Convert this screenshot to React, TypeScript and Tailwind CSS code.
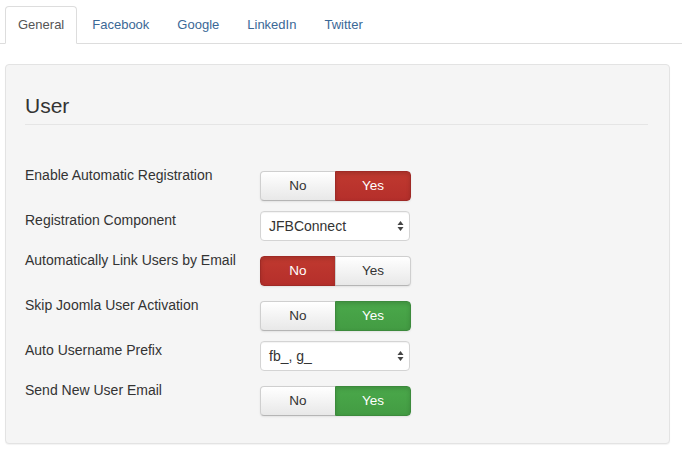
import React from "react";

const font = { fontFamily: '"Liberation Sans", Arial, sans-serif' };

function Toggle({ value, color }: { value: "no" | "yes"; color: "red" | "green" }) {
  const active =
    color === "red"
      ? "bg-[linear-gradient(#c0392f,#b52f2b)] border-[#9f2a26] text-white shadow-[inset_0_2px_4px_rgba(0,0,0,0.15)]"
      : "bg-[linear-gradient(#4aa84a,#439c43)] border-[#3c8a3c] text-white shadow-[inset_0_2px_4px_rgba(0,0,0,0.15)]";
  const inactive =
    "bg-[linear-gradient(#ffffff,#e8e8e8)] border-[#cfcfcf] border-b-[#b5b5b5] text-[#333] shadow-[inset_0_1px_0_rgba(255,255,255,0.3)]";
  return (
    <div className="mt-[5px] flex h-[30px] w-[151px] text-[13.5px] shadow-[0_1px_2px_rgba(0,0,0,0.08)] rounded-[4px]">
      <div
        className={`flex w-[76px] items-center justify-center rounded-l-[4px] border ${
          value === "no" ? active : inactive
        }`}
      >
        No
      </div>
      <div
        className={`-ml-px flex w-[76px] items-center justify-center rounded-r-[4px] border ${
          value === "yes" ? active : inactive
        }`}
      >
        Yes
      </div>
    </div>
  );
}

function Select({ text }: { text: string }) {
  return (
    <div className="flex h-[30px] w-[150px] items-center justify-between rounded-[4px] border border-[#d4d4d4] bg-white pl-[8px] pr-[5px] text-[14px] text-[#333] shadow-[inset_0_1px_1px_rgba(0,0,0,0.05)]">
      <span>{text}</span>
      <svg width="7" height="12" viewBox="0 0 7 12">
        <path d="M3.5 1 L6.5 5 L0.5 5 Z" fill="#444" />
        <path d="M3.5 11 L6.5 7 L0.5 7 Z" fill="#444" />
      </svg>
    </div>
  );
}

function Row({ label, children, first }: { label: string; children: React.ReactNode; first?: boolean }) {
  return (
    <div className={`flex ${first ? "mt-[41px]" : "mt-[10px]"}`}>
      <div className="w-[235px] text-[14px] leading-[18px] text-[#333]">{label}</div>
      {children}
    </div>
  );
}

export default function App() {
  const tabs = ["General", "Facebook", "Google", "LinkedIn", "Twitter"];
  return (
    <div className="h-[454px] w-[682px] bg-white" style={font}>
      <div className="flex border-b border-[#dddddd] pl-[5px] pt-[6px]">
        {tabs.map((t, i) => (
          <div
            key={t}
            className={`-mb-px mr-[2px] flex h-[38px] items-center rounded-t-[4px] border px-[12px] text-[13px] ${
              i === 0
                ? "border-[#dddddd] border-b-white bg-white text-[#555]"
                : "border-transparent text-[#3b6896]"
            }`}
          >
            {t}
          </div>
        ))}
      </div>
      <div className="mx-[5px] mt-[20px] h-[380px] w-[665px] rounded-[4px] border border-[#e3e3e3] bg-[#f5f5f5] pl-[19px] pr-[21px] pt-[29px] shadow-[0_1px_1px_rgba(0,0,0,0.05)]">
        <div className="border-b border-[#e5e5e5] pb-[7px] text-[21px] leading-[23px] text-[#333]">User</div>
        <Row label="Enable Automatic Registration" first>
          <Toggle value="yes" color="red" />
        </Row>
        <Row label="Registration Component">
          <Select text="JFBConnect" />
        </Row>
        <Row label="Automatically Link Users by Email">
          <Toggle value="no" color="red" />
        </Row>
        <Row label="Skip Joomla User Activation">
          <Toggle value="yes" color="green" />
        </Row>
        <Row label="Auto Username Prefix">
          <Select text="fb_, g_" />
        </Row>
        <Row label="Send New User Email">
          <Toggle value="yes" color="green" />
        </Row>
      </div>
    </div>
  );
}
